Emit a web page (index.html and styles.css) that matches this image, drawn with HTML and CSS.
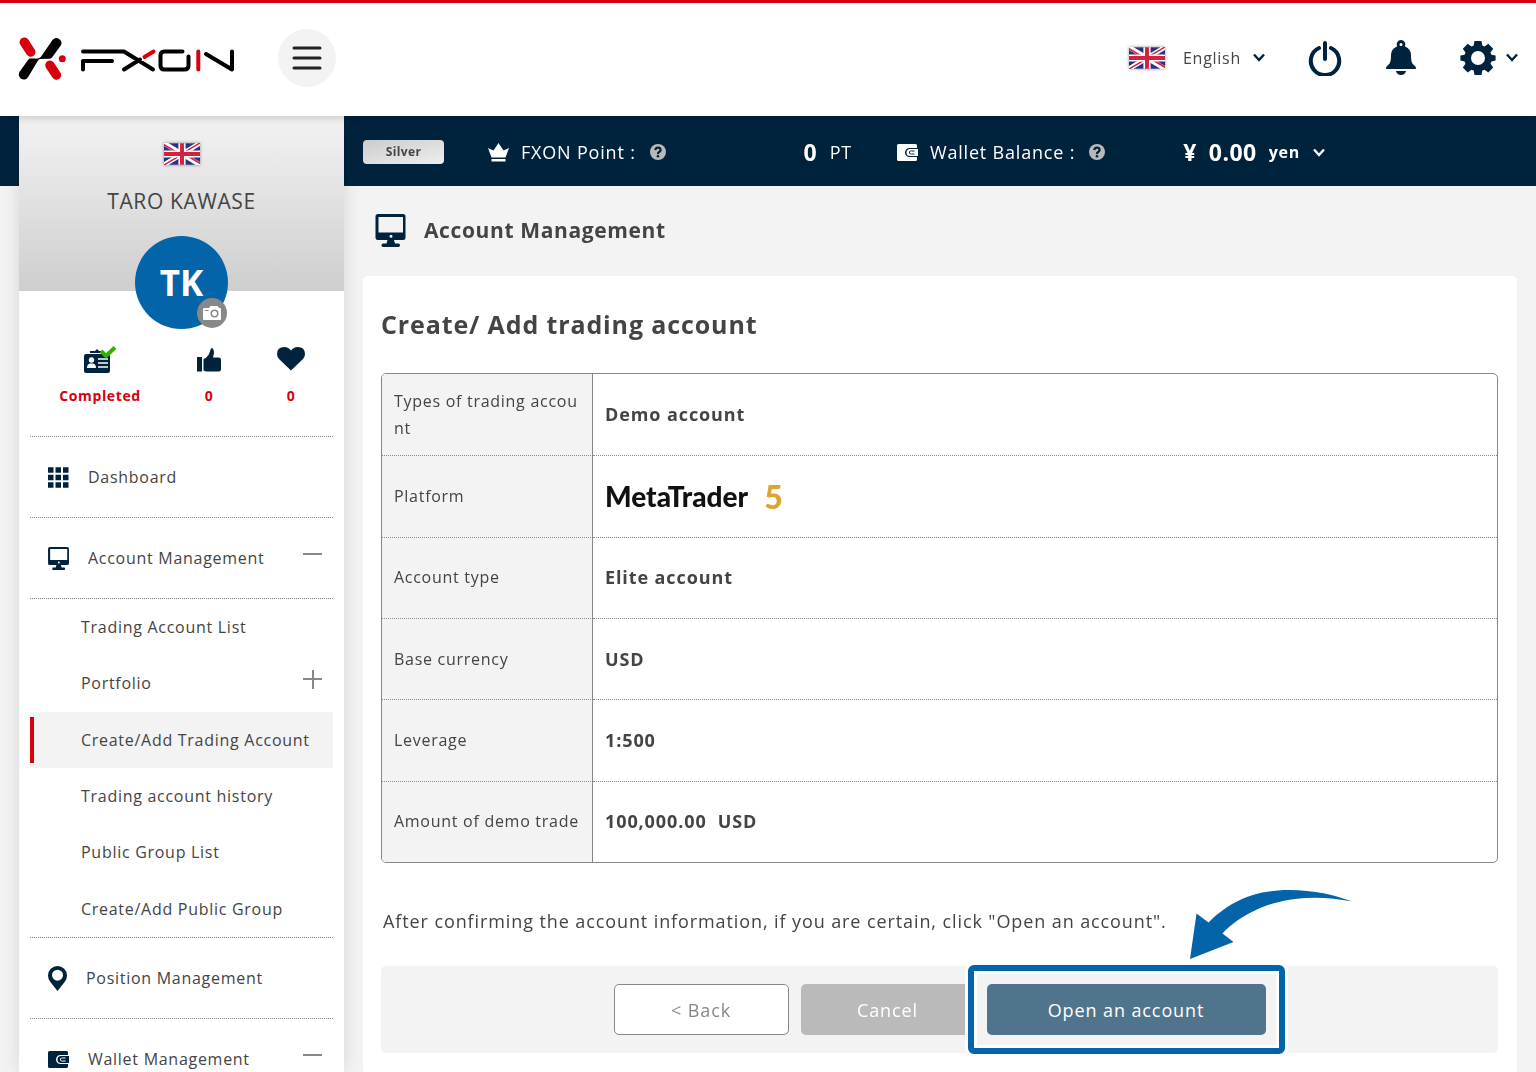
FILE: index.html
```html
<!DOCTYPE html>
<html lang="en">
<head>
<meta charset="utf-8">
<meta name="viewport" content="width=device-width, initial-scale=1">
<title>Create/ Add trading account | FXON</title>
<link rel="stylesheet" href="styles.css">
</head>
<body>
<svg class="defs" aria-hidden="true">
  <symbol id="flag-uk" viewBox="0 0 60 36">
    <path fill="#2b2f80" d="M0 0h60v36H0z"/>
    <path stroke="#fff" stroke-width="8" d="M0 0l60 36M60 0L0 36"/>
    <path stroke="#d4213d" stroke-width="2.6" d="M-1 2l31 18.500M61 34L30 15.500M61 -1L30 17.500M-1 37L30 18.500"/>
    <path stroke="#fff" stroke-width="12" d="M30 0v36M0 18h60"/>
    <path stroke="#d4213d" stroke-width="6.500" d="M30 0v36M0 18h60"/>
  </symbol>
  <symbol id="chevron" viewBox="0 0 12 9"><path fill="none" stroke="currentColor" stroke-width="2.400" d="M1 1.500l5 5.500 5-5.500"/></symbol>
  <symbol id="monitor" viewBox="0 0 30 33">
    <path fill="currentColor" fill-rule="evenodd" d="M2.500 0h25A2.500 2.500 0 0 1 30 2.500v21a2.500 2.500 0 0 1-2.500 2.500H18.500l1 3.500h3.500q1.500 0 1.500 1.700T23 33H7.500Q6 33 6 31.200T7.500 29.500H11l1-3.500H2.500A2.500 2.500 0 0 1 0 23.500v-21A2.500 2.500 0 0 1 2.500 0zM3 3v15.500h24.500V3zM15.500 20.800a1.500 1.500 0 1 0 0 3 1.500 1.500 0 0 0 0-3z"/>
  </symbol>
  <symbol id="wallet" viewBox="0 0 21 17">
    <path fill="currentColor" fill-rule="evenodd" d="M1.500 0h17Q20 0 20 1.500V4h-7.500a4.300 4.300 0 0 0 0 9H20v2.500q0 1.500-1.500 1.500h-17Q0 17 0 15.500v-14Q0 0 1.500 0zM13 5h8v7h-8a3.500 3.500 0 0 1 0-7zm1 1.500a2 2 0 1 0 0 4h3.500v-1H14a1 1 0 0 1 0-2h3.500v-1z"/>
    <circle cx="14" cy="8.500" r="1" fill="currentColor"/>
  </symbol>
  <symbol id="help" viewBox="0 0 16 16">
    <circle cx="8" cy="8" r="8" fill="#b9b9b9"/>
    <path fill="none" stroke="#00233d" stroke-width="2.200" d="M5.300 6.200Q5.500 3.700 8 3.700T10.600 6Q10.600 7.300 9.200 8T8 10.200"/>
    <circle cx="8" cy="12.300" r="1.300" fill="#00233d"/>
  </symbol>
</svg>

<header class="site-header">
  <a class="logo" href="#" aria-label="FXON">
    <svg viewBox="0 0 218 44" width="218" height="44" fill="none" stroke-linecap="round" stroke-linejoin="round">
      <path stroke="#d7000f" stroke-width="9.500" d="M6.300 5.200l6.400 9.800M32 28.300l6.400 9.700"/>
      <circle cx="44.300" cy="21.700" r="3.500" fill="#d7000f"/>
      <path fill="#000" d="M34.500 3A5 5 0 0 1 42.800 8.500L34 20.500Q32.900 21.800 31 21.800l-9 .3q-1.300.2-2 1.400L10 40.300A5 5 0 0 1 1.600 34.800L10 23Q11 21.600 12.800 21.600l7.200-.2q2-.2 3.200-1.900z"/>
      <path stroke="#000" stroke-width="4" d="M65 14.500h41l29 18M65 32.500v-8.500h29M106 32.500L122 22.500M164.500 14.500h-18q-4 0-4 4v10q0 4 4 4h20q4 0 4-4v-9M188 17l26 15.500v-18"/>
      <path stroke="#d7000f" stroke-width="4" d="M126.500 20l9-5.500M180.300 14.500v18"/>
    </svg>
  </a>
  <button class="menu-button" type="button" aria-label="Menu">
    <svg viewBox="0 0 30 26" width="30" height="26"><path stroke="#222" stroke-width="3" stroke-linecap="round" d="M2 3h26M2 13h26M2 23h26"/></svg>
  </button>
  <div class="header-tools">
    <label class="language">
      <svg class="flag" width="36" height="22" aria-hidden="true"><use href="#flag-uk"/></svg>
      <select aria-label="Language"><option>English</option></select>
      <svg width="12" height="9" aria-hidden="true"><use href="#chevron"/></svg>
    </label>
    <button class="tool" type="button" aria-label="Log out">
      <svg viewBox="0 0 34 36" width="34" height="36" fill="none" stroke="currentColor" stroke-width="4" stroke-linecap="round"><path d="M17 3v16M11 8a14.200 14.200 0 1 0 12 0"/></svg>
    </button>
    <button class="tool" type="button" aria-label="Notifications">
      <svg viewBox="0 0 32 36" width="32" height="36" fill="currentColor"><path fill-rule="evenodd" d="M16 0a4.500 4.500 0 0 1 4 6.500c4 1.500 6 5 6 9 0 6 1 8.500 4 10.500 1 .8 1 3 1 3H1s0-2.200 1-3c3-2 4-4.500 4-10.500 0-4 2-7.500 6-9A4.500 4.500 0 0 1 16 0zm0 3a1.500 1.500 0 1 0 0 3 1.500 1.500 0 0 0 0-3z"/><path d="M11 31h10q-1 4-5 4t-5-4z"/></svg>
    </button>
    <button class="tool settings" type="button" aria-label="Settings">
      <svg viewBox="0 0 36 36" width="36" height="36" fill="currentColor"><path fill-rule="evenodd" d="M14.500 1h7l.8 4.600 2.200.9 3.800-2.700 4.900 4.900-2.700 3.800.9 2.200 4.200.8v5l-4.200 1-.9 2.200 2.700 3.800-4.900 4.900-3.800-2.700-2.200.9-.8 4.400h-7l-.8-4.400-2.200-.9-3.800 2.700-4.900-4.900 2.700-3.800-.9-2.200L.4 20.500v-5l4.200-.8.9-2.200-2.700-3.800 4.900-4.900 3.800 2.700 2.200-.9zM18 11a7 7 0 1 0 0 14 7 7 0 0 0 0-14z"/></svg>
      <svg width="12" height="9"><use href="#chevron"/></svg>
    </button>
  </div>
</header>

<div class="shell">
  <aside class="sidebar">
    <div class="profile">
      <svg class="flag" width="36" height="22" role="img" aria-label="United Kingdom"><use href="#flag-uk"/></svg>
      <p class="profile-name">TARO KAWASE</p>
      <div class="avatar">TK
        <button class="avatar-edit" type="button" aria-label="Change photo">
          <svg viewBox="0 0 18 14" width="18" height="14"><path fill="#fff" fill-rule="evenodd" d="M1 2h5l1.500-2h7L16 2h1q1 0 1 1v10q0 1-1 1H1q-1 0-1-1V3q0-1 1-1zm1 2v1h3.500V4zm9.500-.500a4 4 0 1 0 0 8 4 4 0 0 0 0-8zm0 1.500a2.500 2.500 0 1 1 0 5 2.500 2.500 0 0 1 0-5z"/></svg>
        </button>
      </div>
    </div>
    <ul class="stats">
      <li>
        <svg viewBox="0 0 32 28" width="32" height="28"><path fill="#00233d" d="M6 5h5l2-2 2 2h5v2H6zM2 8h22q2 0 2 2v15q0 2-2 2H2q-2 0-2-2V10q0-2 2-2z"/><circle cx="7.500" cy="14" r="2.700" fill="#fff"/><path fill="#fff" d="M3 22q0-4 3-4.500h3q3 .5 3 4.500z"/><path stroke="#fff" stroke-width="1.500" d="M14 13h10M14 17h10M14 21h10"/><path fill="none" stroke="#2fb100" stroke-width="4" d="M17 5l5 5 9-8.500"/></svg>
        <span>Completed</span>
      </li>
      <li>
        <svg viewBox="0 0 24 24" width="24" height="24" fill="#00233d"><path d="M0 9h5v14.500H0zM6.500 11q3-1 5-4 1.500-2.500 2-5.500.3-1.500 1.500-1.500Q17 1 17 5l-1 4.500h5.500q2.500 0 2.500 2.500v9q0 2.500-2.500 2.500H10q-2 0-3.500-1z"/></svg>
        <span>0</span>
      </li>
      <li>
        <svg viewBox="0 0 28 26" width="28" height="26"><path fill="#00233d" d="M14 23.500L2.500 12.500Q0 10.500 0 7.300 0 0 7.300 0 11.500 0 14 3.500 16.500 0 20.700 0 28 0 28 7.300q0 3.200-2.500 5.200z"/></svg>
        <span>0</span>
      </li>
    </ul>
    <nav class="nav" aria-label="Main">
      <div class="nav-row">
        <a href="#"><svg viewBox="0 0 21 21" width="21" height="21"><path stroke="#00233d" stroke-width="5.500" stroke-dasharray="5.500 2" d="M0 3h21M0 10.500h21M0 18h21"/></svg>Dashboard</a>
      </div>
      <div class="nav-row">
        <a href="#"><svg width="21" height="23"><use href="#monitor"/></svg>Account Management</a>
        <button class="toggle" type="button" aria-label="Collapse Account Management"></button>
      </div>
      <ul class="subnav">
        <li><a href="#">Trading Account List</a></li>
        <li><a href="#">Portfolio</a><button class="toggle plus" type="button" aria-label="Expand Portfolio"></button></li>
        <li class="active"><a href="#" aria-current="page">Create/Add Trading Account</a></li>
        <li><a href="#">Trading account history</a></li>
        <li><a href="#">Public Group List</a></li>
        <li><a href="#">Create/Add Public Group</a></li>
      </ul>
      <div class="nav-row">
        <a href="#"><svg viewBox="0 0 19 25" width="19" height="25"><path fill="#00233d" fill-rule="evenodd" d="M9.500 0A9.500 9.500 0 0 1 19 9.500q0 3-2 6L9.500 25 2 15.500q-2-3-2-6A9.500 9.500 0 0 1 9.500 0zm0 3.700a5.500 5.500 0 1 0 0 11 5.500 5.500 0 0 0 0-11z"/></svg>Position Management</a>
      </div>
      <div class="nav-row">
        <a href="#"><svg width="21" height="17"><use href="#wallet"/></svg>Wallet Management</a>
        <button class="toggle" type="button" aria-label="Collapse Wallet Management"></button>
      </div>
    </nav>
  </aside>

  <main class="main">
    <div class="status-bar">
      <span class="rank">Silver</span>
      <div class="points">
        <svg viewBox="0 0 21 19" width="21" height="19" fill="#fff"><path d="M0 5l5.500 2.500L10.500 0l5 7.500L21 5l-3.500 9.500h-14zM3.500 16h14v2.500h-14z"/></svg>
        <span>FXON Point :</span>
        <svg class="help" width="16" height="16" role="img" aria-label="Help"><use href="#help"/></svg>
        <strong>0</strong>
        <span>PT</span>
      </div>
      <div class="balance">
        <svg width="21" height="17"><use href="#wallet"/></svg>
        <span>Wallet Balance :</span>
        <svg class="help" width="16" height="16" role="img" aria-label="Help"><use href="#help"/></svg>
      </div>
      <label class="amount">
        <span>¥</span>
        <span>0.00</span>
        <select aria-label="Currency"><option>yen</option></select>
        <svg width="12" height="9" aria-hidden="true"><use href="#chevron"/></svg>
      </label>
    </div>

    <div class="content">
      <h1 class="page-title"><svg width="31" height="33"><use href="#monitor"/></svg>Account Management</h1>
      <section class="card">
        <h2>Create/ Add trading account</h2>
        <table class="details">
          <tbody>
            <tr><th scope="row">Types of trading account</th><td>Demo account</td></tr>
            <tr><th scope="row">Platform</th><td><span class="mt-logo">MetaTrader <b>5</b></span></td></tr>
            <tr><th scope="row">Account type</th><td>Elite account</td></tr>
            <tr><th scope="row">Base currency</th><td>USD</td></tr>
            <tr><th scope="row">Leverage</th><td>1:500</td></tr>
            <tr><th scope="row">Amount of demo trade</th><td>100,000.00&nbsp; USD</td></tr>
          </tbody>
        </table>
        <p class="note">After confirming the account information, if you are certain, click "Open an account".</p>
        <div class="actions">
          <button class="btn back" type="button">&lt; Back</button>
          <button class="btn cancel" type="button">Cancel</button>
          <div class="callout">
            <button class="btn open" type="button">Open an account</button>
            <svg class="callout-arrow" viewBox="0 0 162 69" width="162" height="69" aria-hidden="true"><path fill="#0464a9" d="M0 69L6.500 23.500l12 9C43 8 70 0 99 0c25 0 46 5 63 11.500-18-3.500-38-5-57-2.500C76 12.500 50 25 32.500 43.500L43.500 52z"/></svg>
          </div>
        </div>
      </section>
    </div>
  </main>
</div>
</body>
</html>
```
FILE: styles.css
```css
:root {
  --navy: #00233d;
  --red: #d7000f;
  --blue: #0464a9;
  --text: #444;
  --grey: #888;
  --pale: #f3f3f3;
}

* {
  box-sizing: border-box;
  letter-spacing: .045em;
}

body {
  margin: 0;
  height: 100vh;
  display: flex;
  flex-direction: column;
  overflow: hidden;
  font-family: "Open Sans", "Liberation Sans", sans-serif;
  font-size: 16px;
  color: var(--text);
  background: var(--pale);
}

.defs { display: none; }
svg { display: block; flex: none; }
a { color: inherit; text-decoration: none; }
ul { list-style: none; margin: 0; padding: 0; }

button, select {
  font: inherit;
  color: inherit;
  background: none;
  border: 0;
  padding: 0;
  cursor: pointer;
}
select { appearance: none; }

.flag { box-shadow: 0 0 3px rgba(0, 0, 0, .4); }

/* Header */
.site-header {
  flex: none;
  display: flex;
  align-items: center;
  height: 116px;
  padding: 0 18px;
  border-top: 3px solid var(--red);
  background: #fff;
  box-shadow: 0 0 10px rgba(0, 0, 0, .25);
  z-index: 1;
}
.logo { margin-bottom: 2px; }
.menu-button {
  display: grid;
  place-items: center;
  width: 58px;
  height: 58px;
  margin: 0 0 4px 42px;
  border-radius: 50%;
  background: var(--pale);
}
.header-tools {
  display: flex;
  align-items: center;
  gap: 43px;
  margin: 0 0 4px auto;
  color: var(--navy);
}
.language { display: flex; align-items: center; }
.language select { margin: 0 12px 0 18px; color: var(--text); }
.tool { display: flex; align-items: center; }
.settings { gap: 10px; }

/* Page shell: the navy band runs behind the sidebar */
.shell {
  flex: 1;
  min-height: 0;
  display: flex;
  padding-left: 19px;
  background: linear-gradient(var(--navy) 70px, var(--pale) 70px);
}

/* Sidebar */
.sidebar {
  flex: none;
  width: 325px;
  overflow: hidden auto;
  scrollbar-width: none;
  background: #fff;
  box-shadow: 0 0 18px rgba(0, 0, 0, .12);
}
.profile {
  display: flex;
  flex-direction: column;
  align-items: center;
  height: 175px;
  padding-top: 27px;
  background: linear-gradient(#f3f3f3, #cecece);
}
.profile-name {
  margin: 21px 0 20px;
  font-size: 21px;
  line-height: 30px;
  letter-spacing: .03em;
}
.avatar {
  position: relative;
  flex: none;
  width: 93px;
  height: 93px;
  border-radius: 50%;
  background: var(--blue);
  color: #fff;
  font-size: 35px;
  font-weight: 700;
  line-height: 93px;
  letter-spacing: 0;
  text-align: center;
}
.avatar-edit {
  position: absolute;
  right: 1px;
  bottom: 1px;
  display: grid;
  place-items: center;
  width: 30px;
  height: 30px;
  border-radius: 50%;
  background: var(--grey);
}
.stats {
  display: grid;
  grid-template-columns: 138px 80px 84px;
  padding: 55px 11px 0 12px;
  height: 145px;
  color: var(--red);
  font-size: 14px;
  font-weight: 700;
}
.stats li {
  display: grid;
  grid-template-rows: 28px 20px;
  gap: 11px;
  place-items: center;
  align-content: start;
}

.nav { padding: 0 11px; }
.nav-row {
  display: flex;
  align-items: center;
  justify-content: space-between;
  height: 81px;
  padding: 0 11px 0 18px;
  border-top: 1px dotted var(--grey);
}
.nav-row a { display: flex; align-items: center; gap: 19px; color: var(--text); }
.nav-row svg { color: var(--navy); }
.subnav {
  display: grid;
  grid-template-rows: repeat(6, 1fr);
  height: 339px;
  border-top: 1px dotted var(--grey);
}
.subnav li {
  position: relative;
  display: flex;
  align-items: center;
  justify-content: space-between;
  padding: 0 11px 0 51px;
}
.subnav .active { background: var(--pale); }
.subnav .active::before {
  content: "";
  position: absolute;
  inset: 5px auto 5px 0;
  width: 4px;
  background: var(--red);
}
.toggle {
  width: 19px;
  height: 19px;
  margin-bottom: 8px;
  background: linear-gradient(var(--grey), var(--grey)) center / 100% 2px no-repeat;
}
.toggle.plus {
  background:
    linear-gradient(var(--grey), var(--grey)) center / 100% 2px no-repeat,
    linear-gradient(var(--grey), var(--grey)) center / 2px 100% no-repeat;
}

/* Status bar */
.main { flex: 1; min-width: 0; overflow: hidden auto; scrollbar-width: none; }
.status-bar {
  display: flex;
  align-items: center;
  height: 70px;
  padding: 2px 19px 0;
  color: #fff;
  font-size: 18px;
}
.rank {
  width: 81px;
  border-radius: 4px;
  background: linear-gradient(165deg, #ccc, #eee);
  color: var(--text);
  font-size: 12px;
  font-weight: 700;
  line-height: 24px;
  letter-spacing: .03em;
  text-align: center;
}
.points, .balance, .amount { display: flex; align-items: center; gap: 12px; white-space: nowrap; }
.points { margin-left: 44px; width: 364px; }
.points .help, .balance .help { margin-left: 2px; }
.points strong { margin-left: auto; font-size: 23px; line-height: 30px; }
.balance { margin-left: 45px; }
.amount { margin-left: 78px; font-size: 23px; font-weight: 700; line-height: 30px; }
.amount span { letter-spacing: .02em; }
.amount select { font-size: 16px; }

/* Content */
.content { padding: 0 19px; }
.page-title {
  display: flex;
  align-items: center;
  gap: 18px;
  height: 90px;
  margin: 0;
  padding: 0 0 2px 12px;
  font-size: 21px;
  letter-spacing: .03em;
}
.page-title svg { color: var(--navy); }
.card {
  padding: 27px 19px 32px 18px;
  border-radius: 5px;
  background: #fff;
}
.card h2 {
  margin: 0 0 27px;
  font-size: 25px;
  line-height: 43px;
  letter-spacing: .035em;
}

.details {
  width: 100%;
  height: 490px;
  table-layout: fixed;
  border: 1px solid var(--grey);
  border-radius: 5px;
  border-spacing: 0;
  overflow: hidden;
  line-height: 27px;
}
.details th {
  width: 211px;
  height: 81px;
  padding: 0 12px;
  border-right: 1px solid var(--grey);
  background: var(--pale);
  font-weight: 400;
  text-align: left;
  word-break: break-all;
}
.details td { padding: 0 12px; font-size: 18px; font-weight: 700; }
.details tr + tr > * { border-top: 1px dotted var(--grey); }
.mt-logo {
  display: flex;
  align-items: center;
  gap: 16px;
  color: #111;
  font-family: Lato, sans-serif;
  font-size: 28px;
  font-weight: 900;
  letter-spacing: 0;
}
.mt-logo b { color: #dba62f; font-size: 32px; letter-spacing: 0; }

.note { margin: 43px 0 30px 2px; font-size: 18px; line-height: 30px; }
.note, .details td, .btn { letter-spacing: .05em; }

.actions {
  display: flex;
  justify-content: center;
  gap: 12px;
  padding: 18px;
  border-radius: 5px;
  background: var(--pale);
}
.btn {
  height: 51px;
  border-radius: 5px;
  font-size: 18px;
}
.back { width: 175px; border: 1px solid var(--grey); background: #fff; color: var(--grey); }
.cancel { width: 174px; background: #bababa; color: #fff; }
.open { position: relative; width: 279px; background: #50748c; color: #fff; }

/* Highlight frame and arrow lying over the button row */
.callout { position: relative; z-index: 1; }
.callout::before {
  content: "";
  position: absolute;
  inset: -19px;
  border: 6px solid var(--blue);
  border-radius: 6px;
  background: var(--pale);
  box-shadow: 0 0 0 3px #fff, inset 0 0 0 3px #fff;
}
.callout-arrow {
  position: absolute;
  left: 203px;
  bottom: 76px;
}
```
